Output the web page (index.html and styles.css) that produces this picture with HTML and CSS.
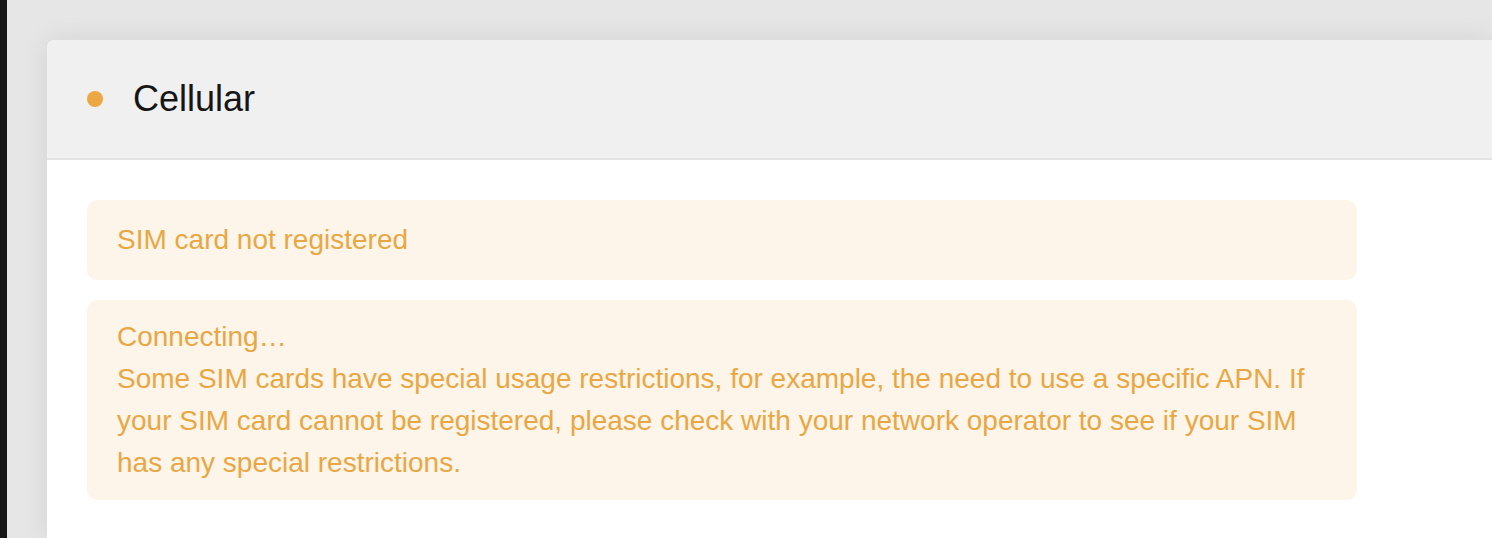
FILE: index.html
```html
<!DOCTYPE html>
<html lang="en">
<head>
    <meta charset="UTF-8">
    <meta name="viewport" content="width=device-width, initial-scale=1.0">
    <title>Cellular</title>

    <link rel="stylesheet" href="styles.css">
</head>
<body>
    <div id="page">
        <div class="sidebar-edge"></div>

        <div class="main">
            <div class="card">
                <div class="card-header">
                    <span class="status-dot"></span>
                    <h2>Cellular</h2>
                </div>
                <div class="card-body">
                    <div class="alert alert-single">SIM card not registered</div>
                    <div class="alert">
                        <p>Connecting…</p>
                        <p>Some SIM cards have special usage restrictions, for example, the need to use a specific APN. If your SIM card cannot be registered, please check with your network operator to see if your SIM has any special restrictions.</p>
                    </div>
                </div>
            </div>
        </div>
    </div>
</body>
</html>
```

FILE: styles.css
```css
* {
    font-family: "Liberation Sans", Arial, Helvetica, sans-serif;
    box-sizing: border-box;
}

html, body {
    margin: 0;
    height: 100%;
    overflow: hidden;
}

body {
    background-color: #e6e6e6;
}

#page {
    display: flex;
    height: 100%;
}

.sidebar-edge {
    width: 7px;
    flex-shrink: 0;
    background-color: #161616;
}

.main {
    flex: 1;
    padding: 40px 0 0 40px;
}

.card {
    background-color: #fff;
    border-radius: 8px 0 0 0;
    height: 100%;
    box-shadow: 0 0 28px rgba(0, 0, 0, 0.09);
}

.card-header {
    display: flex;
    align-items: center;
    height: 120px;
    padding-left: 40px;
    background-color: #f0f0f0;
    border-bottom: 2px solid #e4e4e4;
    border-radius: 8px 0 0 0;
}

.status-dot {
    width: 16px;
    height: 16px;
    border-radius: 50%;
    background-color: #eba845;
}

.card-header h2 {
    margin: 0 0 0 30px;
    font-size: 36px;
    font-weight: normal;
    color: #161616;
}

.card-body {
    padding: 40px;
    display: flex;
    flex-direction: column;
    gap: 20px;
}

.alert {
    width: 1270px;
    padding: 16px 30px;
    background-color: #fdf5e9;
    border-radius: 10px;
    color: #e9a744;
    font-size: 28px;
    line-height: 42px;
}

.alert-single {
    padding-top: 19px;
    padding-bottom: 19px;
}

.alert p {
    margin: 0;
}
```
